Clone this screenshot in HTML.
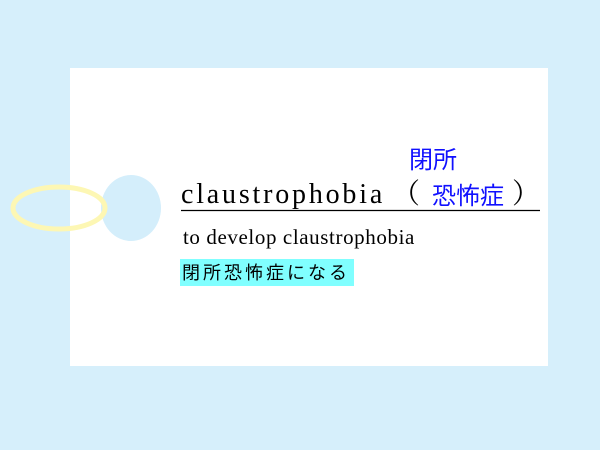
<!DOCTYPE html>
<html><head><meta charset="utf-8"><style>
html,body{margin:0;padding:0}
body{width:600px;height:450px;background:#d6effb;position:relative;overflow:hidden;font-family:"Liberation Serif","Noto Serif CJK SC",serif}
.card{position:absolute;left:70px;top:68px;width:478px;height:298px;background:#fff}
.t{position:absolute;white-space:nowrap;line-height:1}
</style></head><body>
<div class="card"></div>
<svg width="600" height="450" style="position:absolute;left:0;top:0">
<ellipse cx="131" cy="208" rx="30" ry="33" fill="#d4eefb"/>
<ellipse cx="59" cy="208" rx="46" ry="21" fill="none" stroke="#fdf7b4" stroke-width="5"/>
<line x1="181" y1="210.5" x2="540" y2="210.5" stroke="#000" stroke-width="1.2"/>
</svg>
<div class="t" style="left:181px;top:181px;font-size:28px;color:#000;letter-spacing:2.8px">claustrophobia</div>
<div class="t" style="left:392px;top:181px;font-size:28px;color:#000">（</div>
<div class="t" style="left:409px;top:146px;font-size:24px;color:#1010ff;font-family:'Noto Sans CJK JP',sans-serif">閉所</div>
<div class="t" style="left:432px;top:182px;font-size:24px;color:#1010ff;font-family:'Noto Sans CJK JP',sans-serif">恐怖症</div>
<div class="t" style="left:512px;top:181px;font-size:28px;color:#000">）</div>
<div class="t" style="left:183px;top:227px;font-size:21px;color:#000;letter-spacing:0.6px">to develop claustrophobia</div>
<div style="position:absolute;left:180px;top:259px;width:174px;height:27px;background:#80ffff"></div>
<div class="t" style="left:182px;top:263px;font-size:18px;color:#000;font-family:'Noto Sans CJK JP',sans-serif;letter-spacing:3px">閉所恐怖症になる</div>
</body></html>
